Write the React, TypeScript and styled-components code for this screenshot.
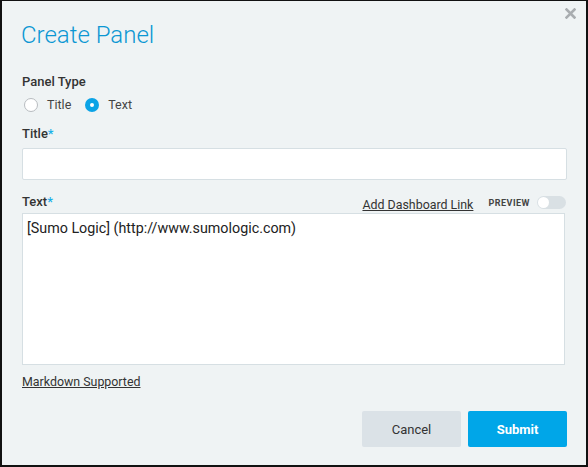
import React from "react";
import styled, { createGlobalStyle } from "styled-components";

const Global = createGlobalStyle`
  html, body { margin: 0; padding: 0; }
  body { font-family: Roboto, "Liberation Sans", sans-serif; }
`;

const Dialog = styled.div`
  position: relative;
  box-sizing: border-box;
  width: 588px;
  height: 467px;
  background: #eff3f4;
  border: 2px solid #111;
  border-width: 1px 2px 2px 2px;
  padding: 18px 20px 0 20px;
  display: flex;
  flex-direction: column;
  color: #333;
`;

const Close = styled.button`
  position: absolute;
  top: 7px;
  right: 10px;
  border: 0;
  background: none;
  padding: 0;
  cursor: pointer;
  display: flex;
`;

const Heading = styled.h1`
  margin: 0 0 0 -1px;
  font-size: 24px;
  line-height: 32px;
  font-weight: 300;
  color: #0b97d3;
`;

const Label = styled.div<{ $mt: number }>`
  margin-top: ${(p) => p.$mt}px;
  font-size: 13px;
  line-height: 16px;
  font-weight: 500;
  color: #333;
`;

const Star = styled.span`
  color: #1ab0e8;
`;

const RadioRow = styled.div`
  display: flex;
  align-items: center;
  gap: 14px;
  margin-top: 7px;
  padding-left: 2px;
`;

const RadioOpt = styled.label`
  display: flex;
  align-items: center;
  gap: 9px;
  font-size: 12.5px;
  color: #444;
`;

const RadioDot = styled.span<{ $on?: boolean }>`
  box-sizing: border-box;
  width: 14px;
  height: 14px;
  border-radius: 50%;
  background: ${(p) => (p.$on ? "#0ba3e6" : "#fff")};
  border: ${(p) => (p.$on ? "none" : "1px solid #b8bcc0")};
  display: flex;
  align-items: center;
  justify-content: center;
  &::after {
    content: "";
    display: ${(p) => (p.$on ? "block" : "none")};
    width: 4px;
    height: 4px;
    border-radius: 50%;
    background: #fff;
  }
`;

const Input = styled.div`
  box-sizing: border-box;
  margin-top: 6px;
  margin-right: -1px;
  height: 32px;
  background: #fff;
  border: 1px solid #d6dfe3;
  border-radius: 2px;
`;

const TextHeader = styled.div`
  display: flex;
  align-items: flex-end;
  margin-top: 12px;
  height: 18px;
`;

const Grow = styled.div`
  flex: 1;
`;

const Link = styled.a`
  font-size: 12.4px;
  color: #333;
  text-decoration: underline;
  line-height: 14px;
`;

const HeaderLink = styled(Link)`
  margin-bottom: -2px;
`;

const Preview = styled.span`
  margin-left: 15px;
  font-size: 9px;
  font-weight: 700;
  letter-spacing: 0.5px;
  color: #444;
  line-height: 14px;
`;

const Toggle = styled.span`
  box-sizing: border-box;
  margin-left: 7px;
  margin-right: 0;
  margin-bottom: 1px;
  width: 29px;
  height: 13px;
  border-radius: 7px;
  background: #d9e0e4;
  padding: 1px;
  display: flex;
  &::after {
    content: "";
    width: 11px;
    height: 11px;
    border-radius: 50%;
    background: #fff;
  }
`;

const TextArea = styled.div`
  box-sizing: border-box;
  margin: 3px 1px 0 0;
  height: 152px;
  background: #fff;
  border: 1px solid #d6dfe3;
  padding: 5px 4px;
  font-size: 14.3px;
  line-height: 18px;
  color: #222;
`;

const Footer = styled.div`
  margin-top: 10px;
  display: flex;
`;

const Buttons = styled.div`
  margin-top: 22px;
  display: flex;
  justify-content: flex-end;
  gap: 7px;
  margin-right: -1px;
`;

const Button = styled.button<{ $primary?: boolean }>`
  width: 99px;
  height: 36px;
  border: 0;
  border-radius: 2px;
  font-family: Roboto, "Liberation Sans", sans-serif;
  font-size: 13px;
  font-weight: ${(p) => (p.$primary ? 700 : 400)};
  background: ${(p) => (p.$primary ? "#00a6e8" : "#dbe2e7")};
  color: ${(p) => (p.$primary ? "#fff" : "#333")};
`;

export default function App() {
  return (
    <>
      <Global />
      <Dialog>
        <Close aria-label="close">
          <svg width="11" height="11" viewBox="0 0 11 11">
            <path d="M1.5 1.5 L9.5 9.5 M9.5 1.5 L1.5 9.5" stroke="#a9adb0" strokeWidth="2.6" strokeLinecap="square" />
          </svg>
        </Close>
        <Heading>Create Panel</Heading>
        <Label $mt={23}>Panel Type</Label>
        <RadioRow>
          <RadioOpt>
            <RadioDot />
            Title
          </RadioOpt>
          <RadioOpt>
            <RadioDot $on />
            Text
          </RadioOpt>
        </RadioRow>
        <Label $mt={14}>
          Title<Star>*</Star>
        </Label>
        <Input />
        <TextHeader>
          <Label $mt={0}>
            Text<Star>*</Star>
          </Label>
          <Grow />
          <HeaderLink>Add Dashboard Link</HeaderLink>
          <Preview>PREVIEW</Preview>
          <Toggle />
        </TextHeader>
        <TextArea>[Sumo Logic] (http://www.sumologic.com)</TextArea>
        <Footer>
          <Link>Markdown Supported</Link>
        </Footer>
        <Buttons>
          <Button>Cancel</Button>
          <Button $primary>Submit</Button>
        </Buttons>
      </Dialog>
    </>
  );
}
